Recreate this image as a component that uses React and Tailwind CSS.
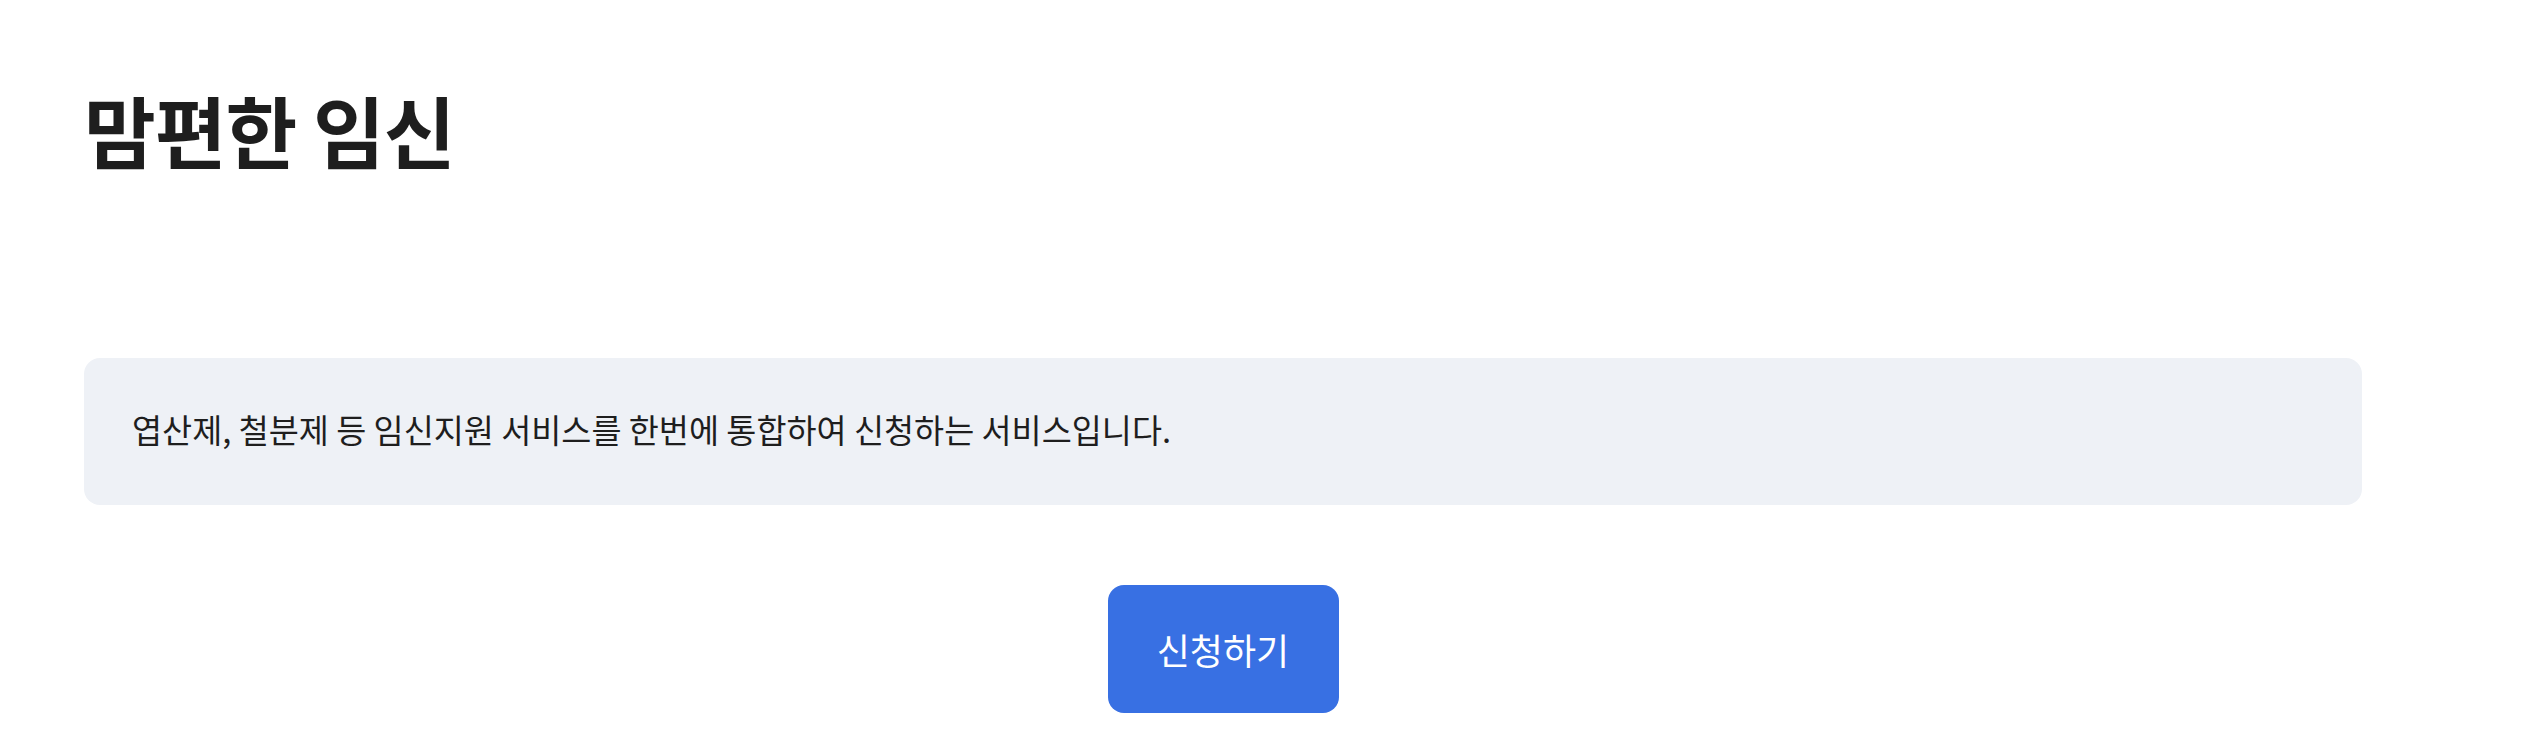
export default function App() {
  return (
    <div
      className="min-h-screen bg-white pl-[84px] pt-[90px] text-[#1e1e1e]"
      style={{ fontFamily: '"Noto Sans CJK KR", "Noto Sans", sans-serif' }}
    >
      <h1 className="text-[78px] font-bold leading-none tracking-[-1px]">맘편한 임신</h1>

      <div className="mt-[190px] flex h-[147px] w-[2278px] items-center rounded-[16px] bg-[#eef1f6] pb-[5px] pl-[48px]">
        <p className="text-[32.7px] text-[#1e1e1e]">
          엽산제, 철분제 등 임신지원 서비스를 한번에 통합하여 신청하는 서비스입니다.
        </p>
      </div>

      <div className="mt-[80px] flex w-[2278px] justify-center">
        <button className="flex h-[128px] w-[231px] items-center justify-center rounded-[16px] bg-[#3870e3] text-[36px] text-white">
          신청하기
        </button>
      </div>
    </div>
  );
}
